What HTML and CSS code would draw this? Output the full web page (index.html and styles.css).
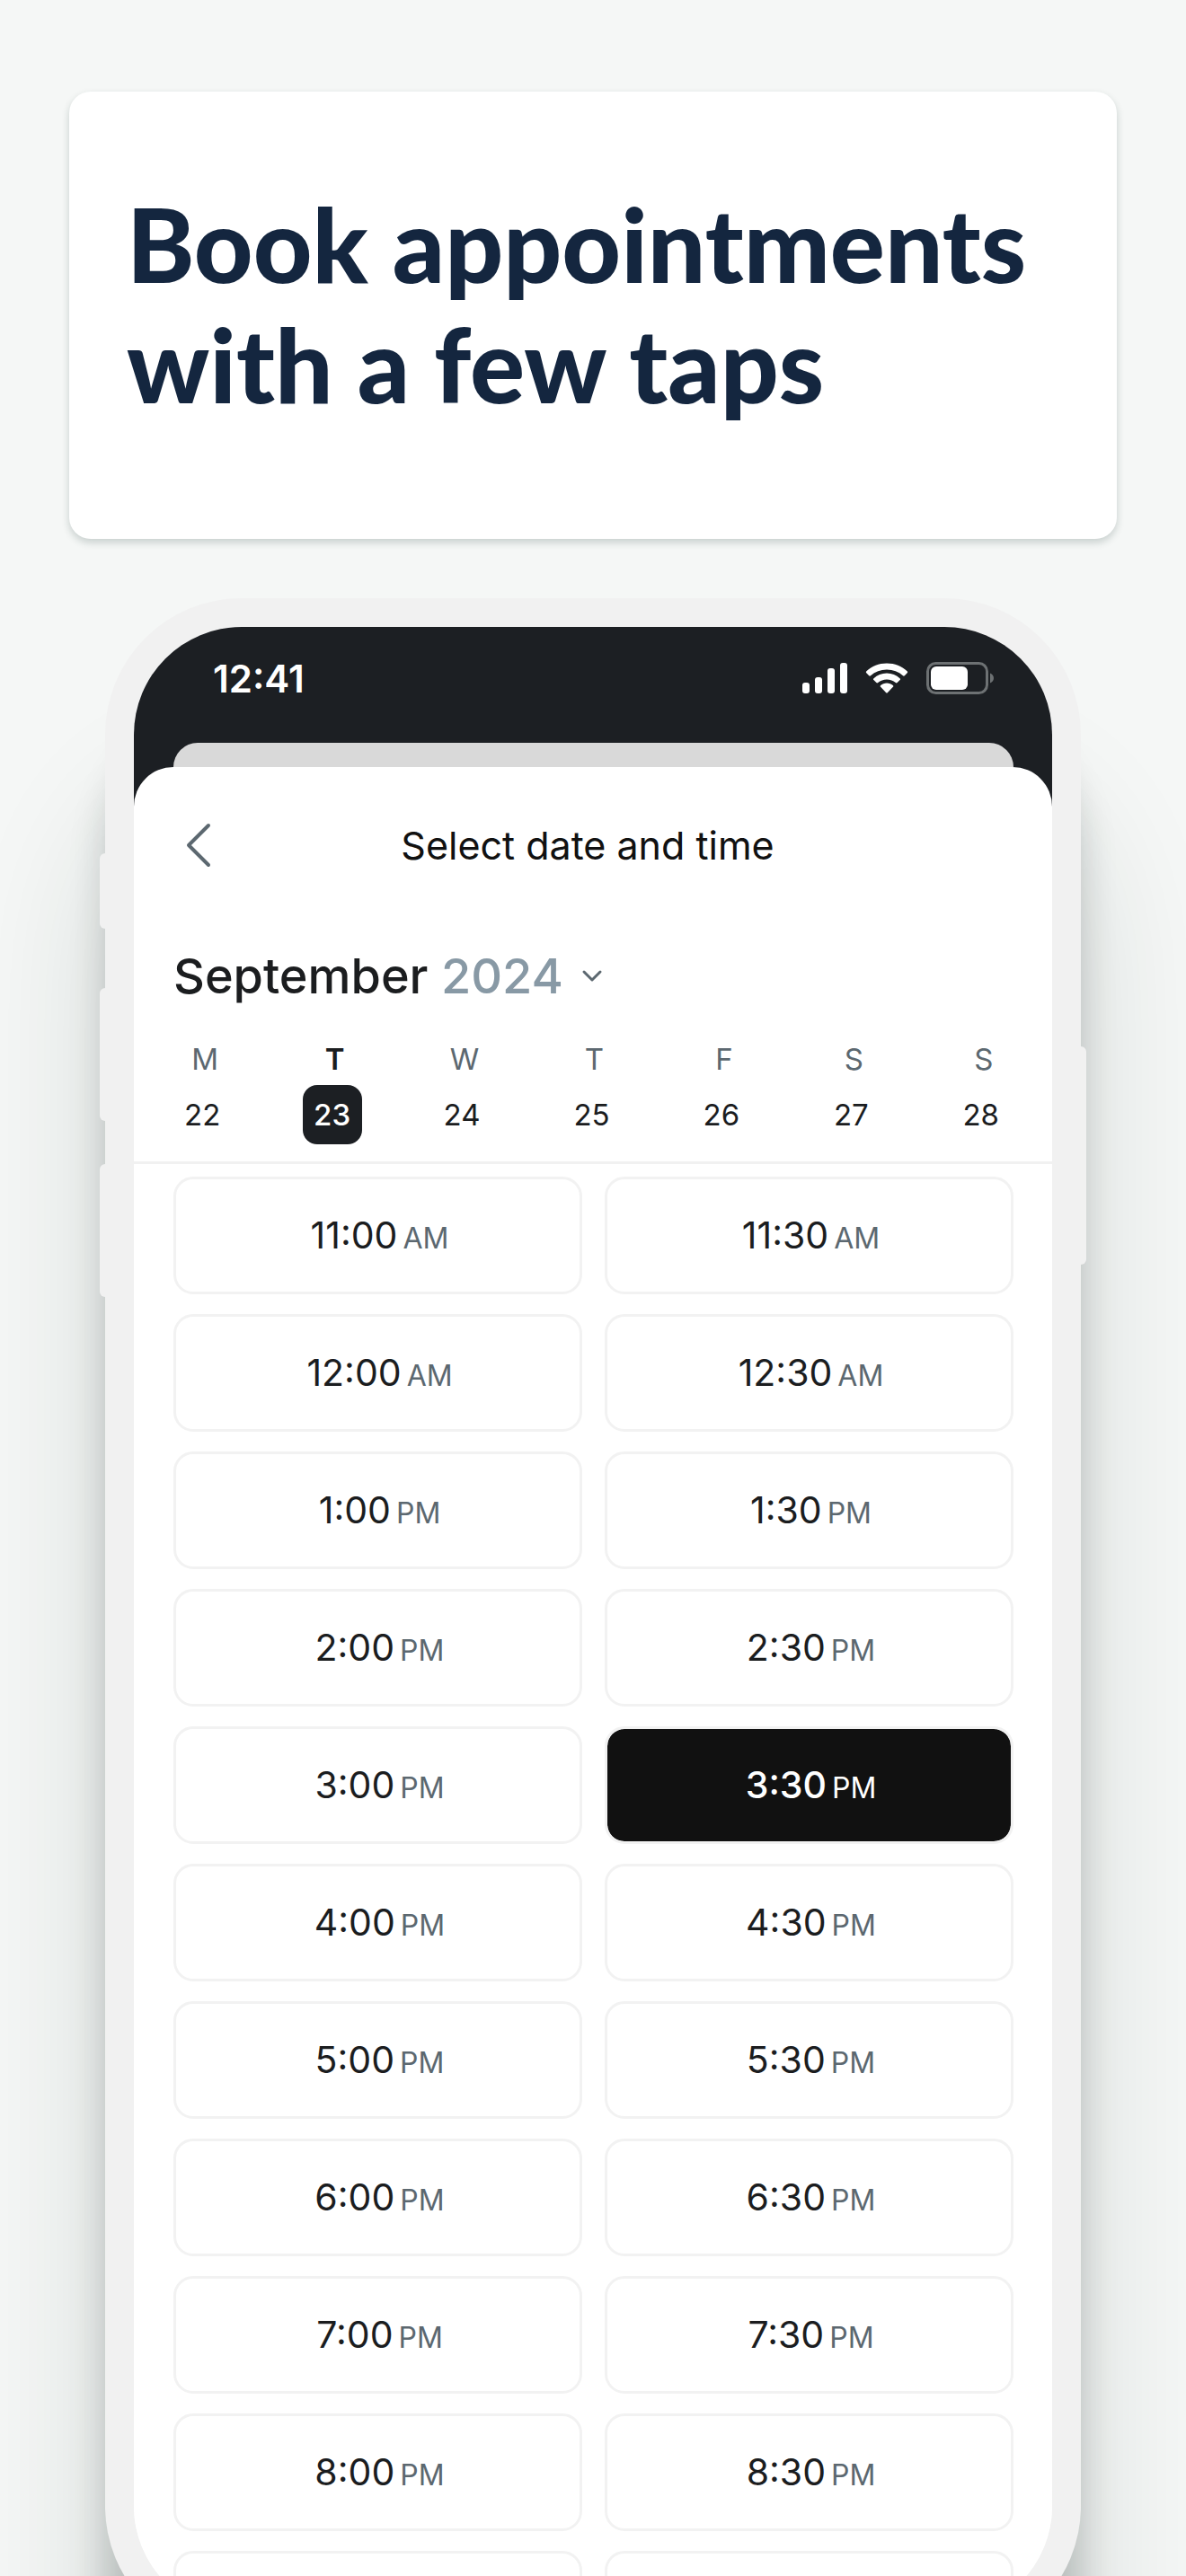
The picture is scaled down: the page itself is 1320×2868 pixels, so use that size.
FILE: index.html
```html
<!DOCTYPE html>
<html lang="en">
<head>
    <meta charset="UTF-8">
    <meta content="width=device-width, initial-scale=1.0" name="viewport">
    <title>Book appointments</title>
    <link rel="stylesheet" href="styles.css">
</head>
<body>
<header class="banner">
    <h1>Book appointments<br>with a few taps</h1>
</header>
<main class="phone">
    <span class="side-button mute"></span>
    <span class="side-button volume-up"></span>
    <span class="side-button volume-down"></span>
    <span class="side-button power"></span>

    <div class="screen">
        <div class="status-bar">
            <span class="clock">12:41</span>
            <div class="status-icons">
                <svg width="50" height="36" viewBox="0 0 50 36" fill="#fff">
                    <rect x="0" y="23" width="8" height="12" rx="3"/>
                    <rect x="14" y="17" width="8" height="18" rx="3"/>
                    <rect x="28" y="7" width="8" height="28" rx="3"/>
                    <rect x="42" y="1" width="8" height="34" rx="3"/>
                </svg>
                <svg width="48" height="36" viewBox="0 0 48 36" fill="#fff">
                    <path d="M24 1.500C33 1.500 40.500 4.800 46.600 10.300C47.300 11 47.300 11.600 46.700 12.200L43.800 15.200C43.200 15.800 42.600 15.800 42 15.200C37 10.800 31 8.500 24 8.500S11 10.800 6 15.200C5.400 15.800 4.800 15.800 4.200 15.200L1.300 12.200C.7 11.600 .7 11 1.400 10.300C7.500 4.800 15 1.500 24 1.500Z"/>
                    <path d="M24 12.600C29.700 12.600 34.600 14.700 38.500 18.200C39.200 18.800 39.200 19.500 38.600 20.100L35.600 23.100C35 23.700 34.400 23.600 33.800 23.100C31 20.700 27.800 19.500 24 19.500S17 20.700 14.200 23.100C13.600 23.600 13 23.700 12.400 23.100L9.400 20.100C8.800 19.500 8.800 18.800 9.500 18.200C13.400 14.700 18.300 12.600 24 12.600Z"/>
                    <path d="M24 23.500C26.700 23.500 29 24.500 30.800 26C31.500 26.600 31.500 27.200 30.900 27.800L25 33.900C24.300 34.700 23.700 34.700 23 33.900L17.100 27.800C16.500 27.200 16.500 26.600 17.200 26C19 24.500 21.300 23.500 24 23.500Z"/>
                </svg>
                <svg width="75" height="36" viewBox="0 0 75 36">
                    <rect x="1.500" y="1.500" width="66" height="33" rx="9" fill="none" stroke="#6d7173" stroke-width="3"/>
                    <path d="M71 12.500C73.500 13.500 75 15.500 75 18S73.500 22.500 71 23.500Z" fill="#6d7173"/>
                    <rect x="5" y="5" width="41" height="26" rx="6" fill="#fff"/>
                </svg>
            </div>
        </div>
        <div class="sheet-behind"></div>

        <section class="sheet">
            <div class="sheet-header">
                <button type="button" class="back" aria-label="Back">
                    <svg width="30" height="52" viewBox="0 0 30 52" fill="none" stroke="#5c6870" stroke-width="4" stroke-linecap="round" stroke-linejoin="round">
                        <path d="M27 4L5 26L27 48"/>
                    </svg>
                </button>
                <h2>Select date and time</h2>
            </div>

            <button type="button" class="month">
                <span>September <span class="year">2024</span></span>
                <svg width="24" height="16" viewBox="0 0 24 16" fill="none" stroke="#5c6870" stroke-width="3" stroke-linecap="round" stroke-linejoin="round">
                    <path d="M3 3L12 12L21 3"/>
                </svg>
            </button>

            <table class="week">
                <thead>
                <tr>
                    <th>M</th>
                    <th class="current">T</th>
                    <th>W</th>
                    <th>T</th>
                    <th>F</th>
                    <th>S</th>
                    <th>S</th>
                </tr>
                </thead>
                <tbody>
                <tr>
                    <td><button type="button">22</button></td>
                    <td><button type="button" class="selected">23</button></td>
                    <td><button type="button">24</button></td>
                    <td><button type="button">25</button></td>
                    <td><button type="button">26</button></td>
                    <td><button type="button">27</button></td>
                    <td><button type="button">28</button></td>
                </tr>
                </tbody>
            </table>

            <div class="slots">
                <button type="button">11:00 <small>AM</small></button>
                <button type="button">11:30 <small>AM</small></button>
                <button type="button">12:00 <small>AM</small></button>
                <button type="button">12:30 <small>AM</small></button>
                <button type="button">1:00 <small>PM</small></button>
                <button type="button">1:30 <small>PM</small></button>
                <button type="button">2:00 <small>PM</small></button>
                <button type="button">2:30 <small>PM</small></button>
                <button type="button">3:00 <small>PM</small></button>
                <button type="button" class="selected">3:30 <small>PM</small></button>
                <button type="button">4:00 <small>PM</small></button>
                <button type="button">4:30 <small>PM</small></button>
                <button type="button">5:00 <small>PM</small></button>
                <button type="button">5:30 <small>PM</small></button>
                <button type="button">6:00 <small>PM</small></button>
                <button type="button">6:30 <small>PM</small></button>
                <button type="button">7:00 <small>PM</small></button>
                <button type="button">7:30 <small>PM</small></button>
                <button type="button">8:00 <small>PM</small></button>
                <button type="button">8:30 <small>PM</small></button>
                <!-- next row, scrolled under the edge of the screen -->
                <button type="button" aria-label="9:00 PM"></button>
                <button type="button" aria-label="9:30 PM"></button>
            </div>
        </section>
    </div>
</main>
</body>
</html>
```
FILE: styles.css
```css
* {
    box-sizing: border-box;
}

body {
    display: flex;
    flex-direction: column;
    height: 100vh;
    margin: 0;
    overflow: hidden;
    background-color: #f5f7f6;
    color: #1b1d1f;
    font-family: Inter, "Liberation Sans", sans-serif;
}

button {
    padding: 0;
    border: none;
    background: none;
    color: inherit;
    font: inherit;
    cursor: pointer;
}

svg {
    display: block;
}

.banner {
    margin: 102px 77px 66px;
    padding: 102px 64px 128px;
    border-radius: 24px;
    background-color: #fff;
    box-shadow: 0 4px 8px rgba(20, 50, 45, 0.2);
}

.banner h1 {
    margin: 0;
    color: #14263f;
    font-family: Lato, sans-serif;
    font-size: 114px;
    font-weight: 900;
    line-height: 134px;
    white-space: nowrap;
}

/* phone frame, runs off the bottom of the page */
.phone {
    position: relative;
    flex: 1;
    min-height: 0;
    margin: 0 117px -74px;
    padding: 32px;
    border-radius: 152px;
    background-color: #f1f1f1;
    box-shadow: 0 130px 40px rgba(20, 30, 28, 0.2), 0 220px 160px rgba(20, 40, 36, 0.14);
}

.side-button {
    position: absolute;
    left: -6px;
    width: 12px;
    height: 148px;
    border-radius: 6px;
    background-color: #f1f1f1;
}

.mute {
    top: 284px;
    height: 84px;
}

.volume-up {
    top: 434px;
}

.volume-down {
    top: 630px;
}

.power {
    top: 499px;
    right: -6px;
    left: auto;
    height: 243px;
}

.screen {
    height: 100%;
    overflow: hidden;
    border-radius: 120px;
    background: linear-gradient(#1c1f23 240px, #fff 240px);
}

.status-bar {
    display: flex;
    align-items: flex-start;
    justify-content: space-between;
    height: 129px;
    padding: 34px 65px 0 88px;
    color: #fff;
}

.clock {
    font-size: 42px;
    font-weight: 600;
    line-height: 48px;
}

.status-icons {
    display: flex;
    gap: 20px;
    padding-top: 5px;
}

.sheet-behind {
    height: 27px;
    margin: 0 43px 0 44px;
    border-radius: 27px 27px 0 0;
    background-color: #d9d9d9;
}

.sheet {
    border-radius: 44px 44px 0 0;
    background-color: #fff;
}

.sheet-header {
    display: grid;
    grid-template-columns: 64px 1fr 64px;
    align-items: center;
    padding: 59px 56px 0 44px;
}

.back {
    padding-left: 12px;
}

.sheet-header h2 {
    margin: 0;
    color: #111;
    font-size: 43px;
    font-weight: 400;
    line-height: 56px;
    text-align: center;
}

.month {
    display: flex;
    align-items: center;
    gap: 20px;
    margin: 84px 44px 0;
    font-size: 54px;
    font-weight: 500;
    line-height: 68px;
}

.year {
    color: #8899a5;
}

.week {
    width: 100%;
    padding: 0 4px 19px 7px;
    border-bottom: 3px solid #f1f1f1;
    border-spacing: 0;
    table-layout: fixed;
    font-size: 33px;
    line-height: 40px;
}

.week th {
    padding: 38px 0 9px;
    color: #5c6870;
    font-weight: 400;
}

.week .current {
    color: #1b1d1f;
    font-weight: 600;
}

.week td {
    padding: 0 6px 0 0;
    text-align: center;
}

.week td button {
    width: 66px;
    height: 66px;
    border-radius: 16px;
}

.week .selected {
    background-color: #1c1f23;
    color: #fff;
    font-weight: 500;
}

.slots {
    display: grid;
    grid-template-columns: 1fr 1fr;
    grid-auto-rows: 131px;
    gap: 22px 25px;
    padding: 14px 43px 0 44px;
}

.slots button {
    display: flex;
    align-items: baseline;
    justify-content: center;
    gap: 6px;
    padding: 36px 0 0 4px;
    border: 3px solid #f2f2f2;
    border-radius: 22px;
    background-clip: padding-box;
    font-size: 41px;
    line-height: 52px;
}

.slots small {
    color: #5c6870;
    font-size: 32px;
}

.slots .selected {
    background-color: #111;
    color: #fff;
    font-weight: 500;
}

.slots .selected small {
    color: #fff;
    font-weight: 400;
}
```
